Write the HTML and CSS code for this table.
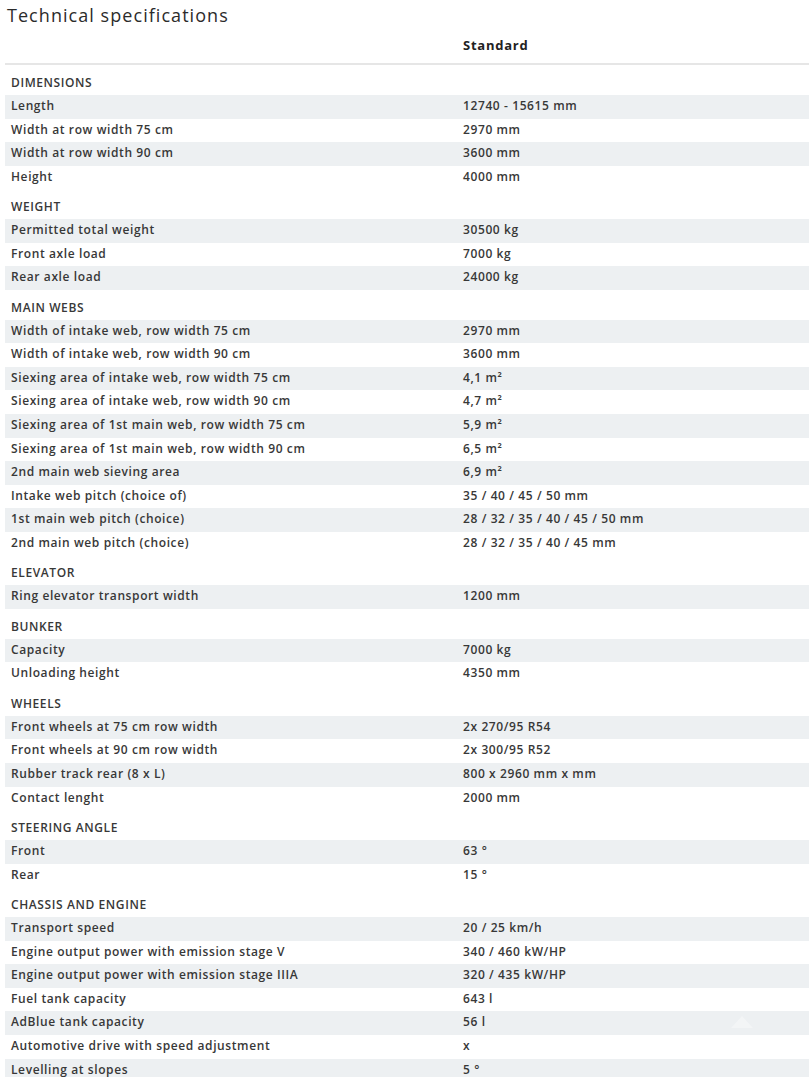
FILE: index.html
```html
<!DOCTYPE html>
<html lang="en">
<head>
<meta charset="utf-8">
<title>Technical specifications</title>
<link rel="stylesheet" href="styles.css">
</head>
<body>
<div class="page">
  <h2 class="title">Technical specifications</h2>
  <table class="specs">
    <thead>
      <tr><th class="label-col"></th><th class="value-col">Standard</th></tr>
    </thead>
    <tbody>
      <tr class="section"><td colspan="2">DIMENSIONS</td></tr>
      <tr class="odd"><td>Length</td><td>12740 - 15615 mm</td></tr>
      <tr><td>Width at row width 75 cm</td><td>2970 mm</td></tr>
      <tr class="odd"><td>Width at row width 90 cm</td><td>3600 mm</td></tr>
      <tr><td>Height</td><td>4000 mm</td></tr>

      <tr class="section"><td colspan="2">WEIGHT</td></tr>
      <tr class="odd"><td>Permitted total weight</td><td>30500 kg</td></tr>
      <tr><td>Front axle load</td><td>7000 kg</td></tr>
      <tr class="odd"><td>Rear axle load</td><td>24000 kg</td></tr>

      <tr class="section"><td colspan="2">MAIN WEBS</td></tr>
      <tr class="odd"><td>Width of intake web, row width 75 cm</td><td>2970 mm</td></tr>
      <tr><td>Width of intake web, row width 90 cm</td><td>3600 mm</td></tr>
      <tr class="odd"><td>Siexing area of intake web, row width 75 cm</td><td>4,1 m²</td></tr>
      <tr><td>Siexing area of intake web, row width 90 cm</td><td>4,7 m²</td></tr>
      <tr class="odd"><td>Siexing area of 1st main web, row width 75 cm</td><td>5,9 m²</td></tr>
      <tr><td>Siexing area of 1st main web, row width 90 cm</td><td>6,5 m²</td></tr>
      <tr class="odd"><td>2nd main web sieving area</td><td>6,9 m²</td></tr>
      <tr><td>Intake web pitch (choice of)</td><td>35 / 40 / 45 / 50 mm</td></tr>
      <tr class="odd"><td>1st main web pitch (choice)</td><td>28 / 32 / 35 / 40 / 45 / 50 mm</td></tr>
      <tr><td>2nd main web pitch (choice)</td><td>28 / 32 / 35 / 40 / 45 mm</td></tr>

      <tr class="section"><td colspan="2">ELEVATOR</td></tr>
      <tr class="odd"><td>Ring elevator transport width</td><td>1200 mm</td></tr>

      <tr class="section"><td colspan="2">BUNKER</td></tr>
      <tr class="odd"><td>Capacity</td><td>7000 kg</td></tr>
      <tr><td>Unloading height</td><td>4350 mm</td></tr>

      <tr class="section"><td colspan="2">WHEELS</td></tr>
      <tr class="odd"><td>Front wheels at 75 cm row width</td><td>2x 270/95 R54</td></tr>
      <tr><td>Front wheels at 90 cm row width</td><td>2x 300/95 R52</td></tr>
      <tr class="odd"><td>Rubber track rear (8 x L)</td><td>800 x 2960 mm x mm</td></tr>
      <tr><td>Contact lenght</td><td>2000 mm</td></tr>

      <tr class="section"><td colspan="2">STEERING ANGLE</td></tr>
      <tr class="odd"><td>Front</td><td>63 °</td></tr>
      <tr><td>Rear</td><td>15 °</td></tr>

      <tr class="section"><td colspan="2">CHASSIS AND ENGINE</td></tr>
      <tr class="odd"><td>Transport speed</td><td>20 / 25 km/h</td></tr>
      <tr><td>Engine output power with emission stage V</td><td>340 / 460 kW/HP</td></tr>
      <tr class="odd"><td>Engine output power with emission stage IIIA</td><td>320 / 435 kW/HP</td></tr>
      <tr><td>Fuel tank capacity</td><td>643 l</td></tr>
      <tr class="odd"><td>AdBlue tank capacity</td><td>56 l</td></tr>
      <tr><td>Automotive drive with speed adjustment</td><td>x</td></tr>
      <tr class="odd"><td>Levelling at slopes</td><td>5 °</td></tr>
    </tbody>
  </table>
  <div class="scroll-hint"></div>
</div>
</body>
</html>
```

FILE: styles.css
```css
html, body {
  margin: 0;
  padding: 0;
  background: #ffffff;
}

body {
  font-family: "Open Sans", "Noto Sans", "DejaVu Sans", sans-serif;
  color: #333333;
}

.page {
  position: relative;
  padding-left: 5px;
}

.title {
  margin: 0;
  padding: 3px 0 0 2px;
  height: 27px;
  box-sizing: border-box;
  font-size: 18px;
  font-weight: 400;
  letter-spacing: 1.05px;
  line-height: 24px;
  color: #2b2b2b;
}

.specs {
  width: 804px;
  border-collapse: collapse;
  border-spacing: 0;
  font-size: 12px;
  font-weight: 600;
  letter-spacing: 0.6px;
}

.specs th {
  text-align: left;
  font-weight: 700;
  font-size: 13px;
  letter-spacing: 0.75px;
  color: #222222;
  height: 36px;
  padding: 0 6px;
  vertical-align: middle;
  border-bottom: 2px solid #e6e6e6;
}

.specs .label-col {
  width: 440px;
}

.specs td {
  padding: 0 6px 1px;
  line-height: 22.55px;
  white-space: nowrap;
  color: #383838;
}

.specs tr.odd td {
  background: #edf0f2;
}

.specs tr.section td {
  padding-top: 7px;
  line-height: 22px;
  padding-bottom: 1px;
  text-transform: uppercase;
}

.scroll-hint {
  position: absolute;
  left: 731px;
  top: 1016px;
  width: 0;
  height: 0;
  border-left: 11px solid transparent;
  border-right: 11px solid transparent;
  border-bottom: 12px solid rgba(255, 255, 255, 0.35);
}
```
